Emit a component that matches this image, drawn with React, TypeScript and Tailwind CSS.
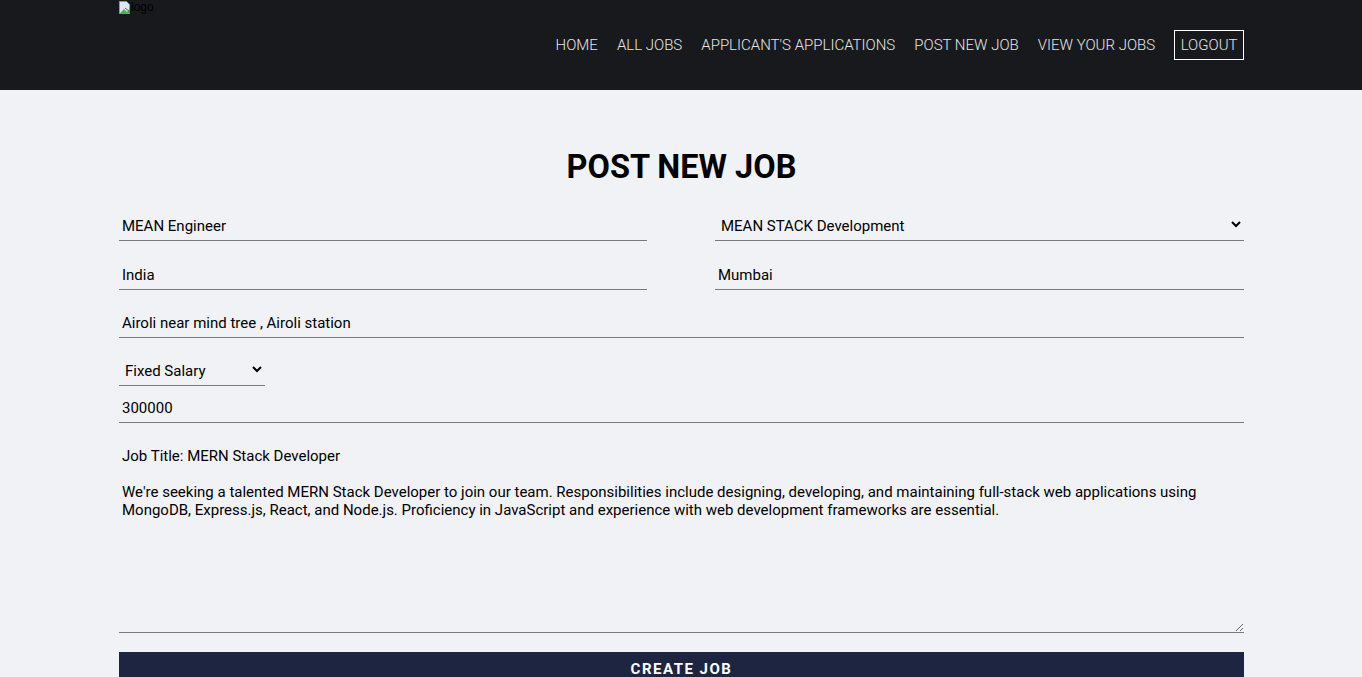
import React from "react";

export default function App() {
  const desc =
    "Job Title: MERN Stack Developer\n\nWe're seeking a talented MERN Stack Developer to join our team. Responsibilities include designing, developing, and maintaining full-stack web applications using MongoDB, Express.js, React, and Node.js. Proficiency in JavaScript and experience with web development frameworks are essential.";
  const inputCls =
    "w-full h-[33px] px-[3px] pt-[4px] bg-transparent border-0 border-b border-[#7a7a7a] text-[15px] text-black outline-none";
  const selectCls =
    "h-[33px] px-[2px] pt-[4px] bg-transparent border-0 border-b border-[#7a7a7a] text-[15px] text-black outline-none";
  return (
    <div className="min-h-[677px] bg-[#f1f2f6]" style={{ fontFamily: "Roboto, 'Noto Sans', sans-serif" }}>
      <header className="h-[90px] bg-[#18191d]">
        <div className="ml-[119px] w-[1125px] h-full flex items-start justify-between">
          <div className="flex items-center h-[14px] text-[12px] leading-[14px] text-black" style={{ fontFamily: "'Liberation Sans', sans-serif" }}>
            <svg width="12" height="13" viewBox="0 0 12 13">
              <path d="M0.5 0.5h7l3 3v9h-10z" fill="#dfe8f5" stroke="#8a97a8" />
              <path d="M1 12l4-4 3 3 3-4v5.5H1z" fill="#4caf50" />
              <path d="M6 7l5 4" stroke="#2e7d32" />
            </svg>
            <span>logo</span>
          </div>
          <nav className="flex items-center gap-[19px] h-full text-[15px] font-light text-[#e6e6e6]">
            <span>HOME</span>
            <span>ALL JOBS</span>
            <span>APPLICANT'S APPLICATIONS</span>
            <span>POST NEW JOB</span>
            <span>VIEW YOUR JOBS</span>
            <span className="border border-white h-[30px] px-[5.5px] flex items-center">LOGOUT</span>
          </nav>
        </div>
      </header>
      <main className="ml-[119px] w-[1125px] pt-[50px]">
        <h1 className="text-center text-[32.5px] font-bold leading-[54px] text-black mb-[14px]">POST NEW JOB</h1>
        <div className="flex flex-col">
          <div className="flex gap-[68px]">
            <div className="w-[528px] shrink-0">
              <input className={inputCls} defaultValue="MEAN Engineer" />
            </div>
            <select className={selectCls + " flex-1"} defaultValue="MEAN STACK Development">
              <option>MEAN STACK Development</option>
            </select>
          </div>
          <div className="flex gap-[68px] mt-[16px]">
            <div className="w-[528px] shrink-0">
              <input className={inputCls} defaultValue="India" />
            </div>
            <div className="flex-1">
              <input className={inputCls} defaultValue="Mumbai" />
            </div>
          </div>
          <div className="mt-[15px]">
            <input className={inputCls} defaultValue="Airoli near mind tree , Airoli station" />
          </div>
          <div className="flex flex-col gap-[4px] mt-[15px]">
            <select className={selectCls + " w-[146px]"} defaultValue="Fixed Salary">
              <option>Fixed Salary</option>
            </select>
            <input className={inputCls} defaultValue="300000" />
          </div>
          <textarea
            className="mt-[16px] w-full h-[194px] px-[3px] pt-[8px] bg-transparent border-0 border-b border-[#7a7a7a] text-[15px] leading-[18px] text-black outline-none"
            defaultValue={desc}
          />
        </div>
        <button className="mt-[19px] w-full h-[40px] bg-[#1e2540] text-white text-[15px] font-bold tracking-[1.5px] pt-[6px] flex justify-center items-start">
          CREATE JOB
        </button>
      </main>
    </div>
  );
}
